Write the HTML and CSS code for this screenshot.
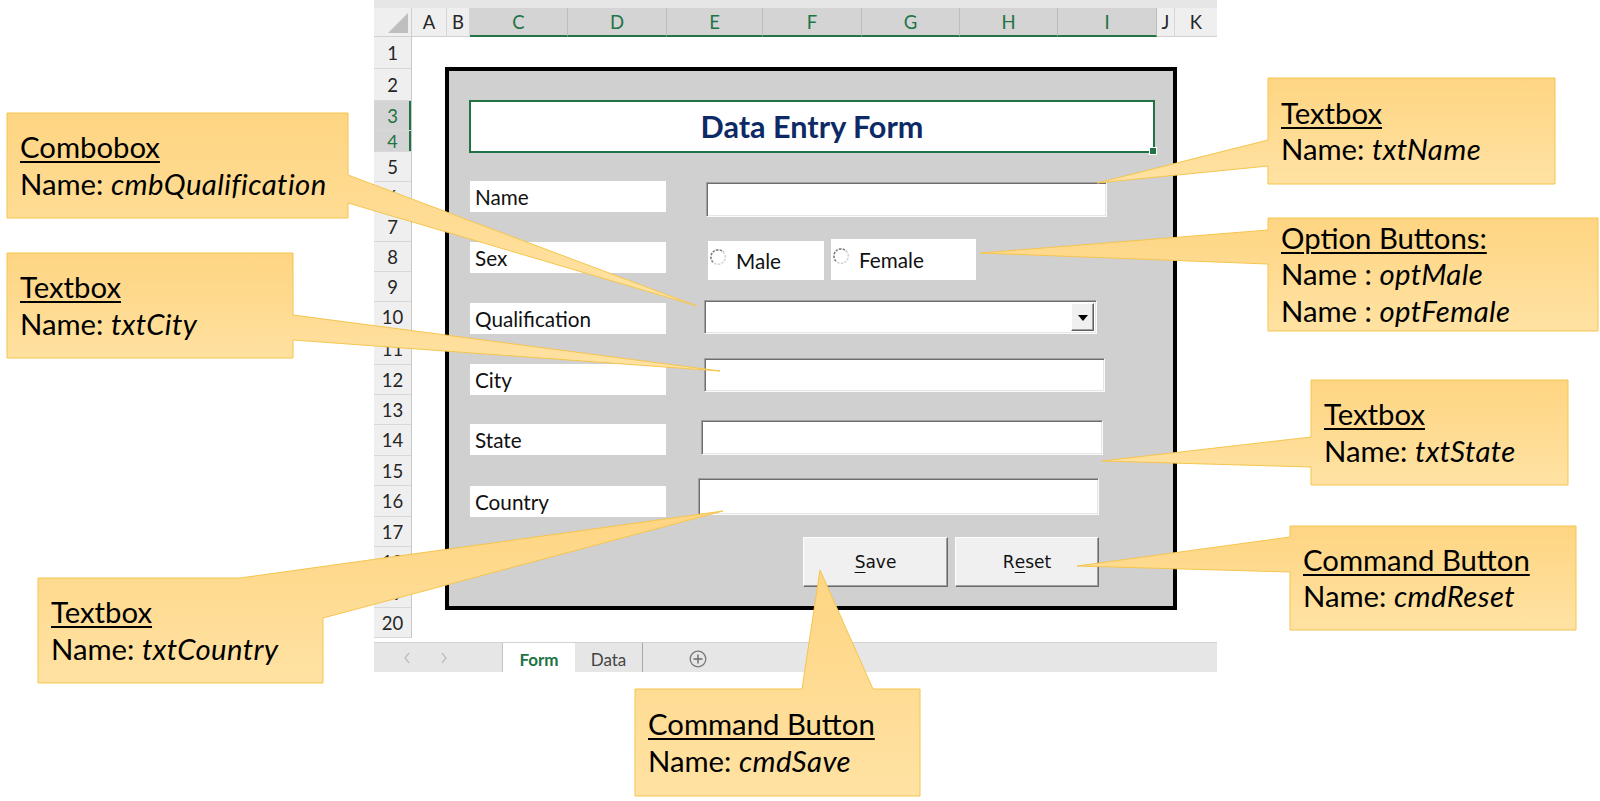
FILE: index.html
```html
<!DOCTYPE html>
<html>
<head>
<meta charset="utf-8">
<link rel="stylesheet" href="styles.css">
</head>
<body>
<div class="page">
  <div class="excel">
    <div class="topstrip"></div>
    <div class="colhdr">
      <div class="corner"><svg class="corner-tri" width="22" height="22" viewBox="0 0 22 22"><polygon points="21,1 21,21 1,21" fill="#bfbfbf"/></svg></div>
      <div class="ch w-a">A</div>
      <div class="ch w-b">B</div>
      <div class="ch sel w-c">C</div>
      <div class="ch sel w-d">D</div>
      <div class="ch sel w-e">E</div>
      <div class="ch sel w-f">F</div>
      <div class="ch sel w-g">G</div>
      <div class="ch sel w-h">H</div>
      <div class="ch sel w-i">I</div>
      <div class="ch w-j">J</div>
      <div class="ch w-k">K</div>
    </div>
    <div class="sheet">
      <div class="rowhdr">
        <div class="rh h32">1</div>
        <div class="rh h32">2</div>
        <div class="rh h30 sel">3</div>
        <div class="rh h21 sel">4</div>
        <div class="rh h30">5</div>
        <div class="rh h30">6</div>
        <div class="rh h30">7</div>
        <div class="rh h30">8</div>
        <div class="rh h30">9</div>
        <div class="rh h31">10</div>
        <div class="rh h32">11</div>
        <div class="rh h30">12</div>
        <div class="rh h30">13</div>
        <div class="rh h31">14</div>
        <div class="rh h30">15</div>
        <div class="rh h31">16</div>
        <div class="rh h30">17</div>
        <div class="rh h31">18</div>
        <div class="rh h30">19</div>
        <div class="rh h30">20</div>
      </div>
      <div class="cells"></div>

      <div class="form">
        <div class="title">Data Entry Form<span class="handle"></span></div>

        <div class="frow row-name">
          <div class="lbl">Name</div>
          <div class="tb tb-name"></div>
        </div>

        <div class="frow row-sex">
          <div class="lbl">Sex</div>
          <div class="opt opt-male"><svg class="radio" width="18" height="18" viewBox="0 0 18 18"><circle cx="9" cy="9" r="7.2" fill="#fff"/><path d="M3 13.2 A7.2 7.2 0 0 1 13.2 3" fill="none" stroke="#7c7c7c" stroke-width="1.6" stroke-dasharray="2.4 1.2"/><path d="M13.2 3 A7.2 7.2 0 0 1 3 13.2" fill="none" stroke="#d4d4d4" stroke-width="1.5" stroke-dasharray="2.4 1.2"/></svg><span>Male</span></div>
          <div class="opt opt-female"><svg class="radio" width="18" height="18" viewBox="0 0 18 18"><circle cx="9" cy="9" r="7.2" fill="#fff"/><path d="M3 13.2 A7.2 7.2 0 0 1 13.2 3" fill="none" stroke="#7c7c7c" stroke-width="1.6" stroke-dasharray="2.4 1.2"/><path d="M13.2 3 A7.2 7.2 0 0 1 3 13.2" fill="none" stroke="#d4d4d4" stroke-width="1.5" stroke-dasharray="2.4 1.2"/></svg><span>Female</span></div>
        </div>

        <div class="frow row-qual">
          <div class="lbl">Qualification</div>
          <div class="tb tb-combo"><div class="dd"><span class="tri"></span></div></div>
        </div>

        <div class="frow row-city">
          <div class="lbl">City</div>
          <div class="tb tb-city"></div>
        </div>

        <div class="frow row-state">
          <div class="lbl">State</div>
          <div class="tb tb-state"></div>
        </div>

        <div class="frow row-country">
          <div class="lbl">Country</div>
          <div class="tb tb-country"></div>
        </div>

        <div class="frow row-btns">
          <div class="btn btn-save"><u>S</u>ave</div>
          <div class="btn btn-reset">R<u>e</u>set</div>
        </div>
      </div>
    </div>
    <div class="gap"></div>
    <div class="tabbar">
      <div class="nav">
        <svg width="8" height="12" viewBox="0 0 8 12"><path d="M6 1 L2 6 L6 11" fill="none" stroke="#bdbdbd" stroke-width="1.3"/></svg>
        <svg width="8" height="12" viewBox="0 0 8 12"><path d="M2 1 L6 6 L2 11" fill="none" stroke="#bdbdbd" stroke-width="1.3"/></svg>
      </div>
      <div class="tab tab-active">Form</div>
      <div class="tab tab-data">Data</div>
      <div class="add"><svg width="18" height="18" viewBox="0 0 18 18"><circle cx="9" cy="9" r="7.8" fill="none" stroke="#7a7a7a" stroke-width="1.3"/><path d="M9 4.5 V13.5 M4.5 9 H13.5" stroke="#6a6a6a" stroke-width="1.4"/></svg></div>
    </div>
  </div>

  <svg class="callouts" width="1600" height="801" viewBox="0 0 1600 801">
    <defs>
      <linearGradient id="gold" x1="0" y1="0" x2="0" y2="1">
        <stop offset="0" stop-color="#fed582"/>
        <stop offset="1" stop-color="#ffe2a3"/>
      </linearGradient>
    </defs>
    <g fill="url(#gold)" stroke="#f5c54e" stroke-width="1">
      <path d="M7,113 H348 V175 L697,306 L348,203 V218 H7 Z"/>
      <path d="M7,253 H293 V315 L720,371 L293,340 V358 H7 Z"/>
      <path d="M1268,78 H1555 V184 H1268 V166 L1097,183 L1268,140 Z"/>
      <path d="M1268,218 H1598 V331 H1268 V264 L980,253 L1268,230 Z"/>
      <path d="M1311,380 H1568 V485 H1311 V467 L1102,461 L1311,437 Z"/>
      <path d="M1290,526 H1576 V630 H1290 V572 L1077,566 L1290,537 Z"/>
      <path d="M38,578 H240 L723,511 L323,618 V683 H38 Z"/>
      <path d="M635,689 H802 L820,570 L873,689 H920 V796 H635 Z"/>
    </g>
  </svg>

  <div class="ct ct-combo"><span class="u">Combobox</span><span>Name: <i>cmbQualification</i></span></div>
  <div class="ct ct-city"><span class="u">Textbox</span><span>Name: <i>txtCity</i></span></div>
  <div class="ct ct-name"><span class="u">Textbox</span><span>Name: <i>txtName</i></span></div>
  <div class="ct ct-opt"><span class="u">Option Buttons:</span><span>Name : <i>optMale</i></span><span>Name : <i>optFemale</i></span></div>
  <div class="ct ct-state"><span class="u">Textbox</span><span>Name: <i>txtState</i></span></div>
  <div class="ct ct-reset"><span class="u">Command Button</span><span>Name: <i>cmdReset</i></span></div>
  <div class="ct ct-country"><span class="u">Textbox</span><span>Name: <i>txtCountry</i></span></div>
  <div class="ct ct-save"><span class="u">Command Button</span><span>Name: <i>cmdSave</i></span></div>
</div>
</body>
</html>
```

FILE: styles.css
```css
html, body {
  margin: 0;
  padding: 0;
  background: #fff;
}
body {
  font-family: Lato, "Liberation Sans", sans-serif;
}
.page {
  position: relative;
  width: 1600px;
  height: 801px;
  overflow: hidden;
  background: #fff;
}

/* ---------- Excel window ---------- */
.excel {
  margin-left: 374px;
  width: 843px;
}
.topstrip {
  height: 8px;
  background: #e6e6e6;
}
.colhdr {
  display: flex;
  height: 29px;
  background: #efefef;
}
.corner {
  width: 38px;
  position: relative;
  box-sizing: border-box;
  border-right: 1px solid #d0d0d0;
  border-bottom: 1px solid #d0d0d0;
}
.corner-tri {
  position: absolute;
  right: 2px;
  bottom: 2px;
}
.ch {
  display: flex;
  align-items: center;
  justify-content: center;
  box-sizing: border-box;
  font-size: 18.5px;
  color: #262626;
  border-right: 1px solid #d6d6d6;
  border-bottom: 1px solid #d0d0d0;
}
.ch.sel {
  background: #d4d4d4;
  color: #217346;
  border-bottom: 2px solid #217346;
  border-right-color: #bdbdbd;
}
.w-a { width: 35px; }
.w-b { width: 23px; }
.w-c { width: 98px; }
.w-d { width: 99px; }
.w-e { width: 96px; }
.w-f { width: 99px; }
.w-g { width: 98px; }
.w-h { width: 98px; }
.w-i { width: 99px; }
.w-j { width: 18px; }
.w-k { width: 42px; border-right: none; }

.sheet {
  position: relative;
  display: flex;
  height: 601px;
}
.rowhdr {
  width: 38px;
  display: flex;
  flex-direction: column;
  background: #efefef;
  box-sizing: border-box;
  border-right: 1px solid #c8c8c8;
}
.rh {
  display: flex;
  align-items: center;
  justify-content: center;
  box-sizing: border-box;
  border-bottom: 1px solid #d8d8d8;
  font-size: 18.5px;
  color: #262626;
  overflow: hidden;
}
.rh.sel {
  background: #d4d4d4;
  color: #217346;
  box-shadow: inset -2px 0 #217346;
}
.h21 { height: 21px; line-height: 19px; font-size: 18px; overflow: visible; }
.h30 { height: 30px; }
.h31 { height: 31px; }
.h32 { height: 32px; }
.cells {
  flex: 1;
  background: #fff;
}
.gap {
  height: 4px;
  background: #fff;
}

/* ---------- Tabs ---------- */
.tabbar {
  display: flex;
  height: 30px;
  background: #e6e6e6;
  box-sizing: border-box;
  border-top: 1px solid #d2d2d2;
}
.nav {
  width: 128px;
  display: flex;
  align-items: center;
  gap: 29px;
  padding-left: 29px;
  box-sizing: border-box;
}
.tab {
  display: flex;
  align-items: center;
  justify-content: center;
  font-size: 17px;
  box-sizing: border-box;
  padding-top: 3px;
}
.tab-active {
  width: 73px;
  background: #fff;
  color: #217346;
  font-weight: 700;
  border-left: 1px solid #c4c4c4;
}
.tab-data {
  width: 68px;
  color: #444;
  border-right: 1px solid #a6a6a6;
}
.add {
  margin-left: 46px;
  display: flex;
  align-items: center;
  padding-top: 3px;
}

/* ---------- Form shape ---------- */
.form {
  position: absolute;
  left: 71px;
  top: 30px;
  width: 732px;
  height: 543px;
  box-sizing: border-box;
  border: 4px solid #000;
  background: #d0d0d0;
  display: flex;
  flex-direction: column;
  padding-top: 29px;
}
.title {
  position: relative;
  margin-left: 20px;
  width: 686px;
  height: 53px;
  box-sizing: border-box;
  border: 2px solid #217346;
  background: #fff;
  display: flex;
  align-items: center;
  justify-content: center;
  font-weight: 700;
  font-size: 30.6px;
  color: #0d2a66;
}
.handle {
  position: absolute;
  right: -4px;
  bottom: -4px;
  width: 6px;
  height: 6px;
  background: #217346;
  border: 1px solid #fff;
}
.frow {
  display: flex;
  align-items: flex-start;
  padding-left: 21px;
}
.row-name { margin-top: 28px; height: 58px; }
.row-sex { height: 61px; }
.row-qual { height: 58px; }
.row-city { height: 62px; }
.row-state { height: 58px; }
.row-country { height: 59px; }
.row-btns { height: 50px; padding-left: 354px; }

.lbl {
  width: 196px;
  height: 31px;
  background: #fff;
  display: flex;
  align-items: center;
  padding-left: 5px;
  box-sizing: border-box;
  font-size: 20.7px;
  color: #111;
}
.row-sex .lbl, .row-qual .lbl { margin-top: 3px; }
.row-city .lbl { margin-top: 6px; }
.row-state .lbl { margin-top: 4px; }
.row-country .lbl { margin-top: 8px; }

.tb {
  background: #fff;
  box-sizing: border-box;
  border: 1px solid;
  border-color: #a0a0a0 #fafafa #fafafa #a0a0a0;
  box-shadow: inset 1px 1px 0 #6e6e6e, inset -1px -1px 0 #e6e6e6;
}
.tb-name { margin-left: 40px; margin-top: 1px; width: 401px; height: 35px; }
.tb-combo { margin-left: 38px; width: 393px; height: 34px; display: flex; justify-content: flex-end; padding: 2px; }
.tb-city { margin-left: 38px; width: 401px; height: 34px; }
.tb-state { margin-left: 35px; width: 402px; height: 35px; }
.tb-country { margin-left: 32px; width: 401px; height: 37px; }

.dd {
  width: 23px;
  height: 100%;
  box-sizing: border-box;
  background: #f0f0f0;
  border: 1px solid;
  border-color: #fff #5e5e5e #5e5e5e #fff;
  box-shadow: inset -1px -1px 0 #a0a0a0;
  display: flex;
  align-items: center;
  justify-content: center;
}
.tri {
  width: 0;
  height: 0;
  border-left: 5px solid transparent;
  border-right: 5px solid transparent;
  border-top: 6px solid #000;
  margin-top: 2px;
}

.opt {
  background: #fff;
  display: flex;
  align-items: center;
  padding-left: 2px;
  box-sizing: border-box;
  font-size: 20.7px;
  color: #111;
}
.opt .radio {
  margin-right: 8px;
  margin-top: -5px;
  flex: none;
}
.opt-male { margin-left: 42px; margin-top: 2px; width: 116px; height: 39px; }
.opt-female { margin-left: 7px; width: 145px; height: 41px; }

.btn {
  height: 50px;
  box-sizing: border-box;
  background: #f0f0f0;
  border: 1px solid;
  border-color: #fdfdfd #6a6a6a #6a6a6a #fdfdfd;
  box-shadow: inset -1px -1px 0 #a0a0a0;
  display: flex;
  align-items: center;
  justify-content: center;
  font-family: "DejaVu Sans", sans-serif;
  font-size: 17px;
  color: #111;
}
.btn u {
  text-underline-offset: 4px;
}
.btn-save { width: 145px; }
.btn-reset { width: 144px; margin-left: 7px; }

/* ---------- Callouts ---------- */
.callouts {
  position: absolute;
  left: 0;
  top: 0;
}
.ct {
  position: absolute;
  display: flex;
  flex-direction: column;
  justify-content: center;
  padding-left: 13px;
  box-sizing: border-box;
  font-size: 29.3px;
  line-height: 36.5px;
  color: #000;
}
.ct span {
  display: block;
  white-space: nowrap;
}
.ct i {
  letter-spacing: 0.4px;
}
.ct .u {
  text-decoration: underline;
  text-decoration-thickness: 1.5px;
  text-underline-offset: 3px;
}
.ct-combo { left: 7px; top: 113px; width: 341px; height: 105px; }
.ct-city { left: 7px; top: 253px; width: 286px; height: 105px; }
.ct-name { left: 1268px; top: 78px; width: 287px; height: 106px; }
.ct-opt { left: 1268px; top: 218px; width: 330px; height: 113px; }
.ct-state { left: 1311px; top: 380px; width: 257px; height: 105px; }
.ct-reset { left: 1290px; top: 526px; width: 286px; height: 104px; }
.ct-country { left: 38px; top: 578px; width: 285px; height: 105px; }
.ct-save { left: 635px; top: 689px; width: 285px; height: 107px; }
```
